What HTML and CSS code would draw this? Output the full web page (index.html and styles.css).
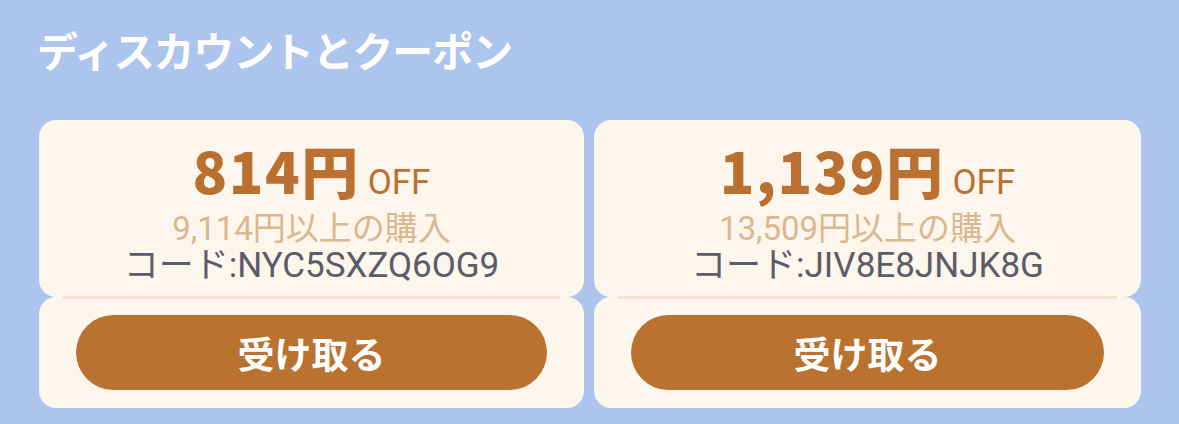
FILE: index.html
```html
<!DOCTYPE html>
<html lang="ja">
<head>
<meta charset="utf-8">
<link rel="stylesheet" href="styles.css">
</head>
<body>
<div class="page">
  <h1 class="title">ディスカウントとクーポン</h1>
  <div class="coupons">
    <div class="coupon">
      <div class="coupon-top">
        <div class="amount"><span class="value">814円</span><span class="off">OFF</span></div>
        <div class="cond">9,114円以上の購入</div>
        <div class="code">コード:NYC5SXZQ6OG9</div>
      </div>
      <div class="divider"></div>
      <div class="coupon-bottom">
        <button class="claim">受け取る</button>
      </div>
    </div>
    <div class="coupon">
      <div class="coupon-top">
        <div class="amount"><span class="value">1,139円</span><span class="off">OFF</span></div>
        <div class="cond">13,509円以上の購入</div>
        <div class="code">コード:JIV8E8JNJK8G</div>
      </div>
      <div class="divider"></div>
      <div class="coupon-bottom">
        <button class="claim">受け取る</button>
      </div>
    </div>
  </div>
</div>
</body>
</html>
```

FILE: styles.css
```css
* { box-sizing: border-box; }
html, body {
  margin: 0;
  padding: 0;
  background: #adc4ed;
}
body {
  font-family: "Noto Sans CJK JP", "Noto Sans", sans-serif;
  width: 1179px;
  height: 424px;
  overflow: hidden;
}
.page {
  padding: 21px 38px 0 39px;
}
.title {
  margin: 0 0 0 -2px;
  font-size: 41px;
  line-height: 56px;
  font-weight: 700;
  color: #ffffff;
  letter-spacing: -1.2px;
}
.coupons {
  display: grid;
  grid-template-columns: 545px 547px;
  column-gap: 10px;
  margin-top: 43px;
}
.coupon {
  display: flex;
  flex-direction: column;
}
.coupon-top {
  background: #fdf6ec;
  border-radius: 17px;
  height: 177px;
  padding-top: 16px;
  text-align: center;
}
.amount {
  line-height: 66px;
  height: 66px;
  color: #b97030;
  white-space: nowrap;
}
.value {
  font-size: 57px;
  font-weight: 900;
  letter-spacing: 1.5px;
}
.off {
  font-family: Roboto, "Noto Sans CJK JP", sans-serif;
  font-size: 35px;
  font-weight: 400;
  margin-left: 8px;
}
.cond {
  font-family: Roboto, "Noto Sans CJK JP", sans-serif;
  font-size: 33px;
  line-height: 44px;
  margin-top: 5px;
  color: #dcb68f;
  white-space: nowrap;
}
.code {
  font-family: Roboto, "Noto Sans CJK JP", sans-serif;
  font-size: 35px;
  line-height: 40px;
  margin-top: -5px;
  color: #5c5c68;
  white-space: nowrap;
}
.divider {
  height: 3px;
  margin: -1px 24px -2px;
  background: #f5e2cf;
  position: relative;
  z-index: 1;
}
.coupon-bottom {
  background: #fdf6ec;
  border-radius: 17px;
  height: 111px;
  padding: 18px 37px;
}
.claim {
  display: block;
  width: 100%;
  height: 75px;
  border: 0;
  border-radius: 38px;
  background: #b97230;
  color: #ffffff;
  font-family: "Noto Sans CJK JP", sans-serif;
  font-size: 37px;
  font-weight: 700;
  padding: 0;
}
```
